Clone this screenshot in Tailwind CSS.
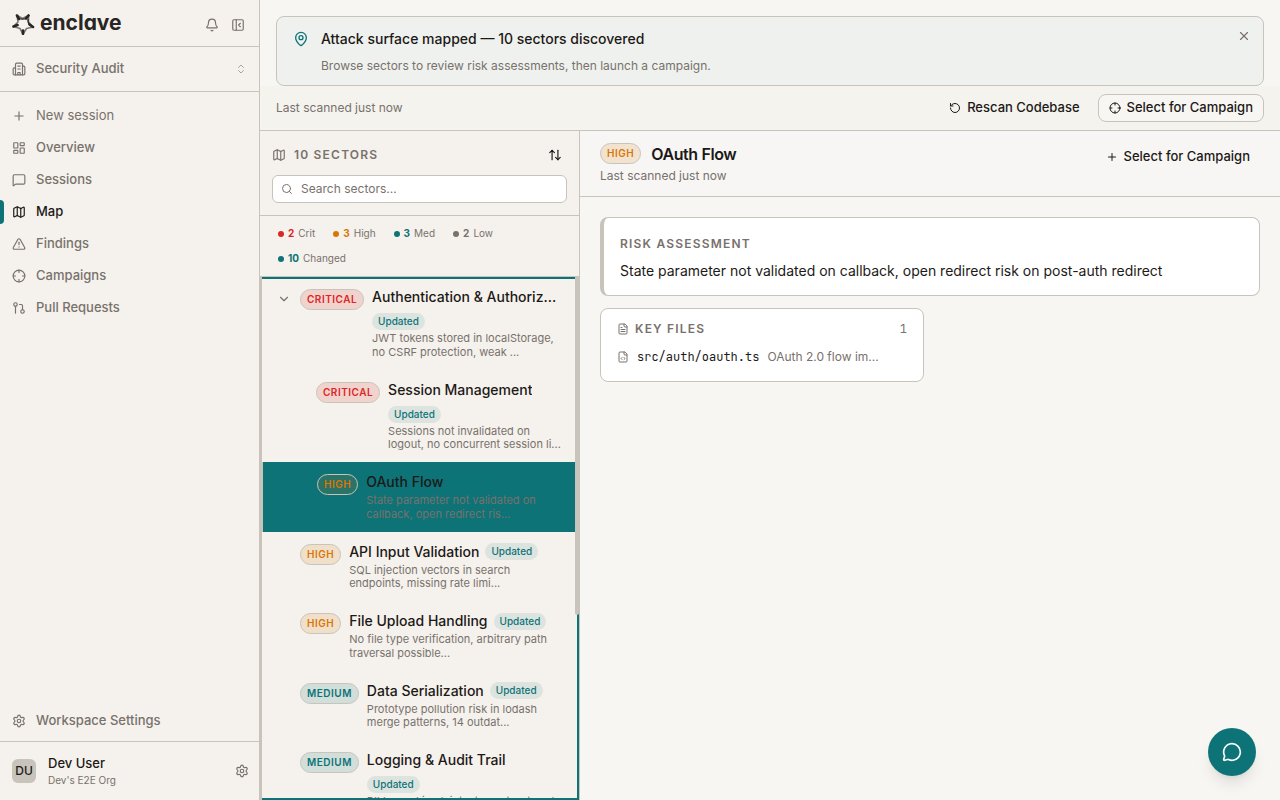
<!DOCTYPE html>
<html lang="en">
<head>
  <meta charset="UTF-8" />
  <meta name="viewport" content="width=device-width, initial-scale=1.0" />
  <title>Map - Enclave</title>
  <script src="https://cdn.jsdelivr.net/npm/@tailwindcss/browser@4"></script>
  <style>
    .wordmark { font-feature-settings: "cv11"; }
    .sector-list { scrollbar-width: none; }
  </style>
</head>
<body class="flex h-screen overflow-hidden bg-[#f7f6f2] font-['Inter',sans-serif] text-[#1c1917] antialiased">
  <!-- Icon sprite -->
  <svg class="hidden" fill="none">
    <symbol id="i-bell" viewBox="0 0 24 24"><path d="M10.268 21a2 2 0 0 0 3.464 0"/><path d="M3.262 15.326A1 1 0 0 0 4 17h16a1 1 0 0 0 .74-1.673C19.41 13.956 18 12.499 18 8A6 6 0 0 0 6 8c0 4.499-1.411 5.956-2.738 7.326"/></symbol>
    <symbol id="i-panel" viewBox="0 0 24 24"><rect width="18" height="18" x="3" y="3" rx="2"/><path d="M9 3v18"/><path d="m16 15-3-3 3-3"/></symbol>
    <symbol id="i-building" viewBox="0 0 24 24"><path d="M6 22V4a2 2 0 0 1 2-2h8a2 2 0 0 1 2 2v18Z"/><path d="M6 10H4a2 2 0 0 0-2 2v8a2 2 0 0 0 2 2h2"/><path d="M18 7h2a2 2 0 0 1 2 2v11a2 2 0 0 1-2 2h-2"/><path d="M10 7h4"/><path d="M10 12h4"/><path d="M10 22v-4h4v4"/></symbol>
    <symbol id="i-updown" viewBox="0 0 24 24"><path d="m7 15 5 5 5-5"/><path d="m7 9 5-5 5 5"/></symbol>
    <symbol id="i-plus" viewBox="0 0 24 24"><path d="M5 12h14"/><path d="M12 5v14"/></symbol>
    <symbol id="i-dashboard" viewBox="0 0 24 24"><rect width="7" height="9" x="3" y="3" rx="1"/><rect width="7" height="5" x="14" y="3" rx="1"/><rect width="7" height="9" x="14" y="12" rx="1"/><rect width="7" height="5" x="3" y="16" rx="1"/></symbol>
    <symbol id="i-message" viewBox="0 0 24 24"><path d="M22 17a2 2 0 0 1-2 2H6.828a2 2 0 0 0-1.414.586l-2.202 2.202A.71.71 0 0 1 2 21.286V5a2 2 0 0 1 2-2h16a2 2 0 0 1 2 2z"/></symbol>
    <symbol id="i-map" viewBox="0 0 24 24"><path d="M14.106 5.553a2 2 0 0 0 1.788 0l3.659-1.83A1 1 0 0 1 21 4.619v12.764a1 1 0 0 1-.553.894l-4.553 2.277a2 2 0 0 1-1.788 0l-4.212-2.106a2 2 0 0 0-1.788 0l-3.659 1.83A1 1 0 0 1 3 19.381V6.618a1 1 0 0 1 .553-.894l4.553-2.277a2 2 0 0 1 1.788 0z"/><path d="M15 5.764v15"/><path d="M9 3.236v15"/></symbol>
    <symbol id="i-alert" viewBox="0 0 24 24"><path d="m21.73 18-8-14a2 2 0 0 0-3.48 0l-8 14A2 2 0 0 0 4 21h16a2 2 0 0 0 1.73-3"/><path d="M12 9v4"/><path d="M12 17h.01"/></symbol>
    <symbol id="i-crosshair" viewBox="0 0 24 24"><circle cx="12" cy="12" r="10"/><path d="M22 12h-4"/><path d="M6 12H2"/><path d="M12 6V2"/><path d="M12 22v-4"/></symbol>
    <symbol id="i-pull" viewBox="0 0 24 24"><circle cx="18" cy="18" r="3"/><circle cx="6" cy="6" r="3"/><path d="M13 6h3a2 2 0 0 1 2 2v7"/><path d="M6 9v12"/></symbol>
    <symbol id="i-settings" viewBox="0 0 24 24"><path d="M9.671 4.136a2.34 2.34 0 0 1 4.659 0 2.34 2.34 0 0 0 3.319 1.915 2.34 2.34 0 0 1 2.33 4.033 2.34 2.34 0 0 0 0 3.831 2.34 2.34 0 0 1-2.33 4.033 2.34 2.34 0 0 0-3.319 1.915 2.34 2.34 0 0 1-4.659 0 2.34 2.34 0 0 0-3.32-1.915 2.34 2.34 0 0 1-2.33-4.033 2.34 2.34 0 0 0 0-3.831A2.34 2.34 0 0 1 6.35 6.051a2.34 2.34 0 0 0 3.319-1.915"/><circle cx="12" cy="12" r="3"/></symbol>
    <symbol id="i-pin" viewBox="0 0 24 24"><path d="M20 10c0 4.993-5.539 10.193-7.399 11.799a1 1 0 0 1-1.202 0C9.539 20.193 4 14.993 4 10a8 8 0 0 1 16 0"/><circle cx="12" cy="10" r="3"/></symbol>
    <symbol id="i-x" viewBox="0 0 24 24"><path d="M18 6 6 18"/><path d="m6 6 12 12"/></symbol>
    <symbol id="i-rotate" viewBox="0 0 24 24"><path d="M3 12a9 9 0 1 0 9-9 9.75 9.75 0 0 0-6.74 2.74L3 8"/><path d="M3 3v5h5"/></symbol>
    <symbol id="i-sort" viewBox="0 0 24 24"><path d="m21 16-4 4-4-4"/><path d="M17 20V4"/><path d="m3 8 4-4 4 4"/><path d="M7 4v16"/></symbol>
    <symbol id="i-search" viewBox="0 0 24 24"><path d="m21 21-4.34-4.34"/><circle cx="11" cy="11" r="8"/></symbol>
    <symbol id="i-chevron" viewBox="0 0 24 24"><path d="m6 9 6 6 6-6"/></symbol>
    <symbol id="i-file" viewBox="0 0 24 24"><path d="M15 2H6a2 2 0 0 0-2 2v16a2 2 0 0 0 2 2h12a2 2 0 0 0 2-2V7Z"/><path d="M14 2v4a2 2 0 0 0 2 2h4"/><path d="M10 9H8"/><path d="M16 13H8"/><path d="M16 17H8"/></symbol>
    <symbol id="i-code" viewBox="0 0 24 24"><path d="M15 2H6a2 2 0 0 0-2 2v16a2 2 0 0 0 2 2h12a2 2 0 0 0 2-2V7Z"/><path d="M14 2v4a2 2 0 0 0 2 2h4"/><path d="m10 13-2 2 2 2"/><path d="m14 17 2-2-2-2"/></symbol>
    <symbol id="i-chat" viewBox="0 0 24 24"><path d="M2.992 16.342a2 2 0 0 1 .094 1.167l-1.065 3.29a1 1 0 0 0 1.236 1.168l3.413-.998a2 2 0 0 1 1.099.092 10 10 0 1 0-4.777-4.719"/></symbol>
  </svg>

  <!-- Sidebar -->
  <aside class="flex w-65 shrink-0 flex-col border-r border-[#c8c4bc] bg-[#f5f1ec] text-[#78716c]">
    <div class="flex h-[47px] items-center justify-between border-b border-[#c8c4bc] pr-3.5 pl-3">
      <a href="#" class="flex items-center gap-1 text-[#292524]">
        <svg class="size-6" viewBox="0 0 24 24" fill="none" stroke="currentColor" stroke-linecap="round" stroke-linejoin="round">
          <path d="M5 4.500 10.500 7.500 16.500 4.500 16.500 11 21 16 14.500 17.500 11 23 8 17.500 1.500 15.500 6 11Z" stroke-width="1.600" opacity=".6"/>
          <path d="M5 4.500 7 8M16.500 4.500 14 7.500M21 16 17.500 13.500M11 22.800V19.500M1.500 15.500 5.500 14" stroke-width="2.600"/>
          <path d="M7 7.500Q11 9 14.500 7.300M16 8Q15.500 12 18 14" stroke-width="1.200"/>
        </svg>
        <span class="wordmark text-[21px] leading-6 font-bold">enclave</span>
      </a>
      <div class="flex items-center gap-3 pt-1">
        <button type="button" aria-label="Notifications"><svg class="size-3.5 fill-none stroke-current stroke-2" stroke-linecap="round" stroke-linejoin="round"><use href="#i-bell"/></svg></button>
        <button type="button" aria-label="Collapse sidebar"><svg class="size-3.5 fill-none stroke-current stroke-2" stroke-linecap="round" stroke-linejoin="round"><use href="#i-panel"/></svg></button>
      </div>
    </div>
    <button type="button" class="flex h-[45px] items-center gap-2.5 border-b border-[#c8c4bc] px-3 text-[13px] font-medium">
      <svg class="size-3.5 fill-none stroke-current stroke-2" stroke-linecap="round" stroke-linejoin="round"><use href="#i-building"/></svg>
      <span class="flex-1 text-left">Security Audit</span>
      <svg class="size-3 fill-none stroke-current stroke-2 opacity-60" stroke-linecap="round" stroke-linejoin="round"><use href="#i-updown"/></svg>
    </button>
    <nav class="flex-1 pt-2 text-[13px] font-medium [&_svg]:size-3.5 [&_svg]:fill-none [&_svg]:stroke-current [&_svg]:stroke-2">
      <a href="#" class="flex h-8 items-center gap-2.5 px-3 font-normal"><svg stroke-linecap="round" stroke-linejoin="round"><use href="#i-plus"/></svg>New session</a>
      <a href="#" class="flex h-8 items-center gap-2.5 px-3"><svg stroke-linecap="round" stroke-linejoin="round"><use href="#i-dashboard"/></svg>Overview</a>
      <a href="#" class="flex h-8 items-center gap-2.5 px-3"><svg stroke-linecap="round" stroke-linejoin="round"><use href="#i-message"/></svg>Sessions</a>
      <a href="#" aria-current="page" class="relative flex h-8 items-center gap-2.5 px-3 text-[#1c1917]"><span class="absolute inset-y-1 left-0 w-1 rounded-r bg-[#0d7377]"></span><svg stroke-linecap="round" stroke-linejoin="round"><use href="#i-map"/></svg>Map</a>
      <a href="#" class="flex h-8 items-center gap-2.5 px-3"><svg stroke-linecap="round" stroke-linejoin="round"><use href="#i-alert"/></svg>Findings</a>
      <a href="#" class="flex h-8 items-center gap-2.5 px-3"><svg stroke-linecap="round" stroke-linejoin="round"><use href="#i-crosshair"/></svg>Campaigns</a>
      <a href="#" class="flex h-8 items-center gap-2.5 px-3"><svg stroke-linecap="round" stroke-linejoin="round"><use href="#i-pull"/></svg>Pull Requests</a>
    </nav>
    <a href="#" class="mb-1 flex h-8 items-center gap-2.5 px-3 text-[13px] font-medium">
      <svg class="size-3.5 fill-none stroke-current stroke-2" stroke-linecap="round" stroke-linejoin="round"><use href="#i-settings"/></svg>Workspace Settings
    </a>
    <div class="flex items-center gap-3 border-t border-[#c8c4bc] py-3 pr-2.5 pl-3">
      <span class="flex size-6 items-center justify-center rounded-md bg-[#c8c4bc] text-xs font-medium text-[#1c1917]">DU</span>
      <div class="flex-1">
        <p class="text-[13px] leading-4.5 font-medium text-[#1c1917]">Dev User</p>
        <p class="text-[10px] leading-4">Dev's E2E Org</p>
      </div>
      <button type="button" aria-label="User settings"><svg class="size-3.5 fill-none stroke-current stroke-2" stroke-linecap="round" stroke-linejoin="round"><use href="#i-settings"/></svg></button>
    </div>
  </aside>

  <main class="flex min-w-0 flex-1 flex-col pt-4">
    <!-- Banner -->
    <div class="mx-4 flex items-start gap-3 rounded-lg border border-[#c8c4bc] bg-[#eff1ee] pt-3 pr-3 pb-2.5 pl-4">
      <svg class="mt-0.5 size-4 fill-none stroke-[#0d7377] stroke-2" stroke-linecap="round" stroke-linejoin="round"><use href="#i-pin"/></svg>
      <div class="flex-1">
        <h2 class="text-sm leading-5 font-medium">Attack surface mapped — 10 sectors discovered</h2>
        <p class="mt-2 text-xs leading-4.5 text-[#78716c]">Browse sectors to review risk assessments, then launch a campaign.</p>
      </div>
      <button type="button" aria-label="Dismiss" class="text-[#78716c]"><svg class="size-3.5 fill-none stroke-current stroke-2" stroke-linecap="round" stroke-linejoin="round"><use href="#i-x"/></svg></button>
    </div>

    <div class="flex items-center justify-between border-b border-[#c8c4bc] bg-[#f4f3ee] px-4 py-2">
      <span class="text-xs text-[#78716c]">Last scanned just now</span>
      <div class="flex gap-2 text-[13px] font-medium">
        <button type="button" class="flex h-7 items-center gap-1.5 px-2.5"><svg class="size-3 fill-none stroke-current stroke-2" stroke-linecap="round" stroke-linejoin="round"><use href="#i-rotate"/></svg>Rescan Codebase</button>
        <button type="button" class="flex h-7 items-center gap-1.5 rounded-lg border border-[#c8c4bc] bg-[#f7f6f2] px-2.5"><svg class="size-3 fill-none stroke-current stroke-2" stroke-linecap="round" stroke-linejoin="round"><use href="#i-crosshair"/></svg>Select for Campaign</button>
      </div>
    </div>

    <div class="flex min-h-0 flex-1">
      <!-- Sector list -->
      <section class="flex w-80 shrink-0 flex-col border-r border-[#c8c4bc] bg-[#f5f1ec]">
        <div class="space-y-2 border-b border-[#c8c4bc] p-3">
          <div class="flex h-6 items-center gap-2 text-[#78716c]">
            <svg class="size-3.5 fill-none stroke-current stroke-2" stroke-linecap="round" stroke-linejoin="round"><use href="#i-map"/></svg>
            <h2 class="flex-1 text-xs font-semibold tracking-widest uppercase">10 sectors</h2>
            <button type="button" aria-label="Sort" class="flex size-6 items-center justify-center text-[#1c1917]"><svg class="size-3.5 fill-none stroke-current stroke-2" stroke-linecap="round" stroke-linejoin="round"><use href="#i-sort"/></svg></button>
          </div>
          <label class="flex h-7 items-center gap-2 rounded-md border border-[#c8c4bc] bg-white px-2 text-[#78716c]">
            <svg class="size-3 fill-none stroke-current stroke-2" stroke-linecap="round" stroke-linejoin="round"><use href="#i-search"/></svg>
            <input type="text" aria-label="Search sectors" placeholder="Search sectors..." class="min-w-0 flex-1 text-xs outline-none placeholder:text-[#78716c]">
          </label>
        </div>
        <div class="flex flex-wrap gap-1.5 border-b border-[#c8c4bc] px-3 py-2 text-[10px] leading-[19px] text-[#78716c]">
          <button type="button" class="flex items-center gap-1 px-1.5"><i class="size-1.5 rounded-full bg-[#dc2626]"></i><b class="font-bold text-[#dc2626]">2</b>Crit</button>
          <button type="button" class="flex items-center gap-1 px-1.5"><i class="size-1.5 rounded-full bg-[#d97706]"></i><b class="font-bold text-[#d97706]">3</b>High</button>
          <button type="button" class="flex items-center gap-1 px-1.5"><i class="size-1.5 rounded-full bg-[#0d7377]"></i><b class="font-bold text-[#0d7377]">3</b>Med</button>
          <button type="button" class="flex items-center gap-1 px-1.5"><i class="size-1.5 rounded-full bg-[#78716c]"></i><b class="font-bold">2</b>Low</button>
          <button type="button" class="flex items-center gap-1 px-1.5"><i class="size-1.5 rounded-full bg-[#0d7377]"></i><b class="font-bold text-[#0d7377]">10</b>Changed</button>
        </div>
        <div class="relative flex min-h-0 flex-1">
          <ul id="sectors" class="sector-list flex-1 overflow-y-auto border-l-2 border-[#c8c4bc] pr-1"></ul>
          <div class="pointer-events-none absolute inset-0 left-0.5 border-y-2 border-r-2 border-[#0d7377]"></div>
          <div id="thumb" class="pointer-events-none absolute top-0 right-0 w-1 rounded-b-xs bg-[#c8c4bc]"></div>
        </div>
      </section>

      <!-- Sector detail -->
      <section class="min-w-0 flex-1">
        <header class="flex items-start justify-between border-b border-[#c8c4bc] bg-[#f7f6f4] px-5 pt-3 pb-2.5">
          <div>
            <div class="flex items-center gap-2.5">
              <span class="rounded-full border border-[#c8c4bc] bg-[#d97706]/15 px-1.5 text-[10px] leading-[19px] font-semibold tracking-wider text-[#d97706]">HIGH</span>
              <h1 class="text-base leading-5 font-semibold tracking-tight">OAuth Flow</h1>
            </div>
            <p class="mt-0.5 text-xs leading-5 text-[#78716c]">Last scanned just now</p>
          </div>
          <button type="button" class="flex h-7 items-center gap-1.5 px-2.5 text-[13px] font-medium"><svg class="size-3 fill-none stroke-current stroke-2" stroke-linecap="round" stroke-linejoin="round"><use href="#i-plus"/></svg>Select for Campaign</button>
        </header>
        <div class="grid grid-cols-2 gap-3 p-5">
          <div class="col-span-2 rounded-lg border border-l-4 border-[#c8c4bc] bg-white px-4 pt-4 pb-3">
            <h3 class="text-xs leading-5 font-semibold tracking-widest text-[#78716c] uppercase">Risk Assessment</h3>
            <p class="mt-1 text-sm leading-[25px]">State parameter not validated on callback, open redirect risk on post-auth redirect</p>
          </div>
          <div class="rounded-lg border border-[#c8c4bc] bg-white px-4 pt-3 pb-2.5 text-xs text-[#78716c]">
            <div class="flex items-center gap-1.5">
              <svg class="size-3 fill-none stroke-current stroke-2" stroke-linecap="round" stroke-linejoin="round"><use href="#i-file"/></svg>
              <h3 class="flex-1 leading-4 font-semibold tracking-widest uppercase">Key Files</h3>
              <span class="font-['JetBrains_Mono','Liberation_Mono',monospace]">1</span>
            </div>
            <a href="#" class="mt-1.5 flex h-7 items-center gap-2"><svg class="size-3 fill-none stroke-current stroke-2" stroke-linecap="round" stroke-linejoin="round"><use href="#i-code"/></svg><code class="font-['JetBrains_Mono','Liberation_Mono',monospace] text-[#1c1917]">src/auth/oauth.ts</code><span>OAuth 2.0 flow im...</span></a>
          </div>
        </div>
      </section>
    </div>
  </main>

  <button type="button" aria-label="Open chat" class="fixed right-6 bottom-6 flex size-12 items-center justify-center rounded-full bg-[#0d7377] text-white shadow-lg">
    <svg class="size-5 fill-none stroke-current stroke-2" stroke-linecap="round" stroke-linejoin="round"><use href="#i-chat"/></svg>
  </button>

  <script>
    const sectors = [
      { level: 'CRITICAL', name: 'Authentication & Authorization', text: 'JWT tokens stored in localStorage, no CSRF protection, weak ...', open: true },
      { level: 'CRITICAL', name: 'Session Management', text: 'Sessions not invalidated on logout, no concurrent session li...', child: true },
      { level: 'HIGH', name: 'OAuth Flow', text: 'State parameter not validated on callback, open redirect ris...', child: true, active: true },
      { level: 'HIGH', name: 'API Input Validation', text: 'SQL injection vectors in search endpoints, missing rate limi...' },
      { level: 'HIGH', name: 'File Upload Handling', text: 'No file type verification, arbitrary path traversal possible...' },
      { level: 'MEDIUM', name: 'Data Serialization', text: 'Prototype pollution risk in lodash merge patterns, 14 outdat...' },
      { level: 'MEDIUM', name: 'Logging & Audit Trail', text: 'PII logged in plaintext, no structured audit trail for admin...' },
      { level: 'MEDIUM', name: 'Dependency Management', text: 'Outdated packages with known advisories, lockfile not check...' },
      { level: 'LOW', name: 'Email Templates', text: 'User content in templates is escaped, minor header handling...' },
      { level: 'LOW', name: 'Static Assets & CDN Config', text: 'Cache headers missing on some assets, no integrity hashes on...' },
    ];
    const tones = {
      CRITICAL: 'bg-[#dc2626]/15 text-[#dc2626]',
      HIGH: 'bg-[#d97706]/15 text-[#d97706]',
      MEDIUM: 'bg-[#0d7377]/15 text-[#0d7377]',
      LOW: 'bg-[#78716c]/15 text-[#78716c]',
    };
    const escapeHtml = text => text.replace(/&/g, '&amp;');
    const list = document.getElementById('sectors');
    const thumb = document.getElementById('thumb');

    list.innerHTML = sectors.map(s => `
      <li class="flex items-start gap-2 py-2.5 pr-3 ${s.child ? 'pl-7.5' : 'pl-3.5'} ${s.active ? 'border-l border-l-[#c8c4bc] bg-[#0d7377]' : ''}">
        ${s.open
          ? '<button type="button" aria-label="Collapse" class="flex h-6 w-4 shrink-0 items-center justify-center text-[#78716c]"><svg class="size-3.5 fill-none stroke-current stroke-2" stroke-linecap="round" stroke-linejoin="round"><use href="#i-chevron"/></svg></button>'
          : '<span class="w-4 shrink-0"></span>'}
        <span class="mt-0.5 shrink-0 rounded-full border border-[#c8c4bc] px-1.5 text-[10px] leading-[19px] font-semibold tracking-wider ${tones[s.level]}">${s.level}</span>
        <div class="min-w-0 flex-1">
          <div class="flex flex-wrap items-center gap-1.5">
            <a href="#" class="truncate text-sm leading-5 font-medium">${escapeHtml(s.name)}</a>
            <span class="rounded-full bg-[#0d7377]/10 px-1.5 text-[10px] leading-[17px] font-medium text-[#0d7377]">Updated</span>
          </div>
          <p class="mt-0.5 text-[11px] leading-tight text-[#78716c]">${escapeHtml(s.text)}</p>
        </div>
      </li>`).join('');

    function placeThumb() {
      const ratio = list.clientHeight / list.scrollHeight;
      thumb.style.height = ratio * list.clientHeight + 'px';
      thumb.style.top = ratio * list.scrollTop + 'px';
    }
    list.addEventListener('scroll', placeThumb);
    window.addEventListener('resize', placeThumb);
    window.addEventListener('load', placeThumb);
    placeThumb();
  </script>
</body>
</html>
